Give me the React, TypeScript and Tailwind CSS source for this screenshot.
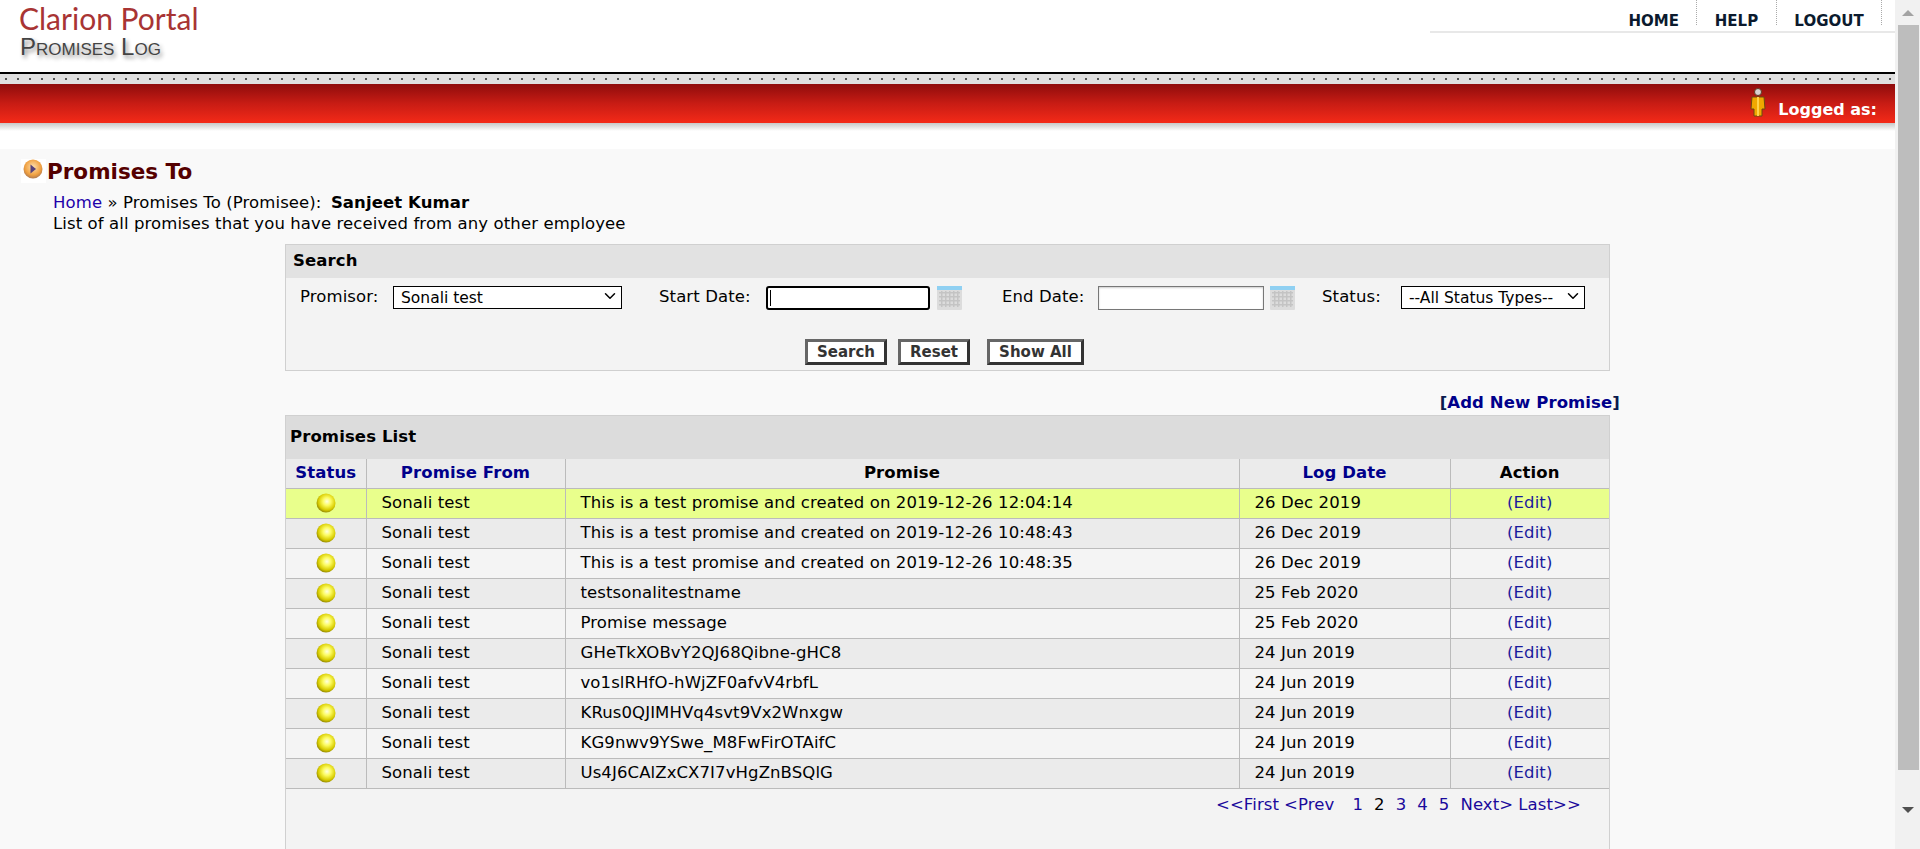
import { ChevronDown } from "lucide-react";

const ROWS = [
  ["This is a test promise and created on 2019-12-26 12:04:14", "26 Dec 2019"],
  ["This is a test promise and created on 2019-12-26 10:48:43", "26 Dec 2019"],
  ["This is a test promise and created on 2019-12-26 10:48:35", "26 Dec 2019"],
  ["testsonalitestname", "25 Feb 2020"],
  ["Promise message", "25 Feb 2020"],
  ["GHeTkXOBvY2QJ68Qibne-gHC8", "24 Jun 2019"],
  ["vo1slRHfO-hWjZF0afvV4rbfL", "24 Jun 2019"],
  ["KRus0QJIMHVq4svt9Vx2Wnxgw", "24 Jun 2019"],
  ["KG9nwv9YSwe_M8FwFirOTAifC", "24 Jun 2019"],
  ["Us4J6CAlZxCX7I7vHgZnBSQlG", "24 Jun 2019"],
];

function Bullet() {
  return (
    <svg width="20" height="20" viewBox="0 0 20 20" className="mx-auto block">
      <defs>
        <radialGradient id="orb" cx="55%" cy="42%" r="60%">
          <stop offset="0%" stopColor="#ffffe0" />
          <stop offset="35%" stopColor="#fcfb60" />
          <stop offset="75%" stopColor="#d8cc00" />
          <stop offset="100%" stopColor="#8e8400" />
        </radialGradient>
      </defs>
      <circle cx="10" cy="10" r="9.5" fill="url(#orb)" />
    </svg>
  );
}

function CalendarIcon() {
  return (
    <svg width="25" height="24" viewBox="0 0 25 24" className="block">
      <rect width="25" height="24" rx="1" fill="#dcdcdc" />
      <rect width="25" height="4" fill="#8fd0f2" />
      <g fill="#c4c4c4">
        {[6, 10, 14, 18].map((y) => (
          <rect key={y} x="2" y={y} width="21" height="1.5" />
        ))}
        {[4, 8, 12, 16, 20].map((x) => (
          <rect key={x} x={x} y="5" width="1.5" height="16" />
        ))}
      </g>
    </svg>
  );
}

function PersonIcon() {
  return (
    <svg width="16" height="29" viewBox="0 0 16 29" className="block mb-[3px]">
      <circle cx="8" cy="4" r="3.5" fill="#d8d0d0" stroke="#5c3a20" />
      <path d="M2 9h12l1 12h-3v7H4v-7H1z" fill="#f0a800" stroke="#6a4a10" />
      <path d="M8 9v19" stroke="#ffd24a" strokeWidth="2" />
    </svg>
  );
}

function PlayOrb() {
  return (
    <div className="bg-white w-[25px] h-[24px] pl-[2px] shrink-0">
      <svg width="20" height="20" viewBox="0 0 20 20" className="block">
        <defs>
          <radialGradient id="playOrb" cx="50%" cy="40%" r="60%">
            <stop offset="0%" stopColor="#fde0b0" />
            <stop offset="70%" stopColor="#f0a040" />
            <stop offset="100%" stopColor="#b07a50" />
          </radialGradient>
        </defs>
        <circle cx="10" cy="10" r="9.5" fill="url(#playOrb)" />
        <path d="M7.5 5.5 13 10l-5.5 4.5z" fill="#55407a" />
      </svg>
    </div>
  );
}

function PushButton({ label, width }: { label: string; width: string }) {
  return (
    <button
      className={`${width} h-[26px] bg-white border-[3px] border-t-[#666] border-l-[#666] border-r-[#333] border-b-[#333] text-[15px] font-bold tracking-normal text-[#333] leading-none`}
    >
      {label}
    </button>
  );
}

function SelectBox({ value, width }: { value: string; width: string }) {
  return (
    <div className={`relative ${width}`}>
      <select
        defaultValue={value}
        className="appearance-none block w-full h-[23px] border border-black bg-white text-[15.5px] tracking-normal pl-[7px]"
      >
        <option>{value}</option>
      </select>
      <ChevronDown
        size={18}
        strokeWidth={2}
        className="absolute right-[3px] top-[1px] pointer-events-none text-black"
      />
    </div>
  );
}

export default function App() {
  return (
    <div className="flex h-[849px] overflow-hidden bg-white font-['DejaVu_Sans',Verdana,sans-serif] text-[16.5px] tracking-[0.1px] text-black">
      <div className="flex-1 min-w-0 flex flex-col">
        {/* Top header */}
        <div className="h-[72px] shrink-0 flex justify-between tracking-normal">
          <div className="pl-[19px]">
            <div className="font-['Lato',sans-serif] text-[30px] leading-[36px] text-[#a83434]">
              Clarion Portal
            </div>
            <div className="font-['Liberation_Sans',sans-serif] [font-variant:small-caps] text-[24px] leading-[22px] text-[#444] [text-shadow:2px_3px_4px_rgba(0,0,0,0.45)] pl-[1px]">
              Promises Log
            </div>
          </div>
          <div className="w-[465px] h-[33px] border-b-2 border-[#e8e8e8] flex justify-end items-start">
            <div className="h-[25px] flex items-stretch pr-[13px] text-[15px] font-bold text-[#0b1a2e]">
              <span className="pr-[17px] pt-[12px] leading-[18px]">HOME</span>
              <span className="w-[80px] border-l border-dotted border-[#aaa] text-center pt-[12px] leading-[18px]">
                HELP
              </span>
              <span className="w-[106px] border-l border-r border-dotted border-[#aaa] text-center pt-[12px] leading-[18px]">
                LOGOUT
              </span>
            </div>
          </div>
        </div>

        {/* Dotted strip + red bar */}
        <div className="shrink-0 border-t-2 border-black h-[12px] bg-[#e0e0e0] bg-[radial-gradient(circle_at_6px_5px,#555_1px,transparent_1.5px)] bg-[length:12px_10px]" />
        <div className="shrink-0 h-[39px] flex justify-end items-end pr-[18px] bg-gradient-to-b from-[#8f0c0c] via-[#c81c14] to-[#f42a18]">
          <div className="flex items-end gap-[12px] pb-[3px]">
            <PersonIcon />
            <span className="text-[16px] font-bold text-white leading-[20px] tracking-normal">
              Logged as:
            </span>
          </div>
        </div>
        <div className="shrink-0 h-[8px] bg-gradient-to-b from-[#c8c8c8] to-white" />
        <div className="shrink-0 h-[18px]" />

        {/* Page body */}
        <div className="flex-1 min-h-0 bg-[#f9f9f9] pt-[10px]">
          <div className="flex items-center pl-[21px] gap-[1px] h-[24px]">
            <PlayOrb />
            <h1 className="text-[21.5px] font-bold text-[#550000] leading-none tracking-normal pt-[1px]">
              Promises To
            </h1>
          </div>
          <div className="pl-[53px] pt-[9px] leading-[21px]">
            <div>
              <a className="text-[#2200aa]">Home</a> » Promises To (Promisee):{" "}
              <b className="ml-[4px]">Sanjeet Kumar</b>
            </div>
            <div>List of all promises that you have received from any other employee</div>
          </div>

          {/* Search panel */}
          <div className="w-[1325px] mx-auto mt-[10px] h-[127px] border border-[#d0d0d0] bg-[#f3f3f3]">
            <div className="h-[33px] bg-[#e2e2e2] flex items-center pl-[7px] font-bold">Search</div>
            <div className="flex items-center pl-[14px] pt-[7px] h-[32px]">
              <span className="w-[93px]">Promisor:</span>
              <SelectBox value="Sonali test" width="w-[229px]" />
              <span className="ml-[37px] w-[107px]">Start Date:</span>
              <div className="relative">
                <input
                  readOnly
                  className="block w-[164px] h-[24px] border-2 border-black rounded-[3px] bg-white"
                />
                <span className="absolute left-[4px] top-[4px] w-px h-[16px] bg-black" />
              </div>
              <span className="ml-[7px]">
                <CalendarIcon />
              </span>
              <span className="ml-[40px] w-[96px]">End Date:</span>
              <input
                readOnly
                className="block w-[166px] h-[24px] border border-[#777] bg-white shadow-[inset_0_1px_2px_rgba(0,0,0,0.2)]"
              />
              <span className="ml-[6px]">
                <CalendarIcon />
              </span>
              <span className="ml-[27px] w-[79px]">Status:</span>
              <SelectBox value="--All Status Types--" width="w-[184px]" />
            </div>
            <div className="flex pl-[519px] pt-[29px] gap-[11px]">
              <PushButton label="Search" width="w-[82px]" />
              <PushButton label="Reset" width="w-[72px]" />
              <span className="ml-[6px]">
                <PushButton label="Show All" width="w-[97px]" />
              </span>
            </div>
          </div>

          <div className="w-[1325px] mx-auto mt-[22px] h-[22px] flex justify-end font-bold leading-[20px] text-[#0b1a4e]">
            <span className="-mr-[10px]">
              [<a className="text-[#00008b]">Add New Promise</a>]
            </span>
          </div>

          {/* Promises list */}
          <div className="w-[1325px] mx-auto h-[600px] border border-[#d0d0d0] bg-[#f3f3f3]">
            <div className="h-[43px] bg-[#dcdcdc] flex items-center pl-[4px] font-bold">
              Promises List
            </div>
            <table className="w-full table-fixed border-collapse">
              <colgroup>
                <col className="w-[80px]" />
                <col className="w-[199px]" />
                <col className="w-[674px]" />
                <col className="w-[211px]" />
                <col />
              </colgroup>
              <thead>
                <tr className="h-[29px] bg-[#ebebeb] font-bold">
                  <th className="border-r border-b border-[#bbb] text-[#00008b]">Status</th>
                  <th className="border-r border-b border-[#bbb] text-[#00008b]">Promise From</th>
                  <th className="border-r border-b border-[#bbb]">Promise</th>
                  <th className="border-r border-b border-[#bbb] text-[#00008b]">Log Date</th>
                  <th className="border-b border-[#bbb]">Action</th>
                </tr>
              </thead>
              <tbody>
                {ROWS.map((row, i) => (
                  <tr
                    key={i}
                    className={`h-[30px] ${
                      i === 0 ? "bg-[#e9ff8c]" : i % 2 === 1 ? "bg-[#ebebeb]" : "bg-[#f4f4f4]"
                    }`}
                  >
                    <td className="border-r border-b border-[#bbb]">
                      <Bullet />
                    </td>
                    <td className="border-r border-b border-[#bbb] pl-[15px]">Sonali test</td>
                    <td className="border-r border-b border-[#bbb] pl-[15px]">{row[0]}</td>
                    <td className="border-r border-b border-[#bbb] pl-[15px]">{row[1]}</td>
                    <td className="border-b border-[#bbb] text-center text-[#1a1a9c]">(Edit)</td>
                  </tr>
                ))}
              </tbody>
            </table>
            <div className="flex gap-[5px] pl-[930px] pt-[6px] text-[#1a0a9c] leading-[20px]">
              <a>&lt;&lt;First</a>
              <a>&lt;Prev</a>
              <a className="ml-[13px]">1</a>
              <span className="ml-[6px] text-black">2</span>
              <a className="ml-[6px]">3</a>
              <a className="ml-[6px]">4</a>
              <a className="ml-[6px]">5</a>
              <a className="ml-[6px]">Next&gt;</a>
              <a>Last&gt;&gt;</a>
            </div>
          </div>
        </div>
      </div>

      {/* Browser scrollbar */}
      <div className="w-[25px] shrink-0 bg-[#f1f1f1] flex flex-col items-center">
        <div className="shrink-0 h-[25px] flex items-center justify-center">
          <div className="w-0 h-0 border-x-[6px] border-x-transparent border-b-[6px] border-b-[#a3a3a3]" />
        </div>
        <div className="shrink-0 w-[21px] h-[745px] ml-[2px] bg-[#bdbdbd]" />
        <div className="flex-1 flex items-center justify-center">
          <div className="w-0 h-0 border-x-[6px] border-x-transparent border-t-[6px] border-t-[#505050]" />
        </div>
      </div>
    </div>
  );
}
